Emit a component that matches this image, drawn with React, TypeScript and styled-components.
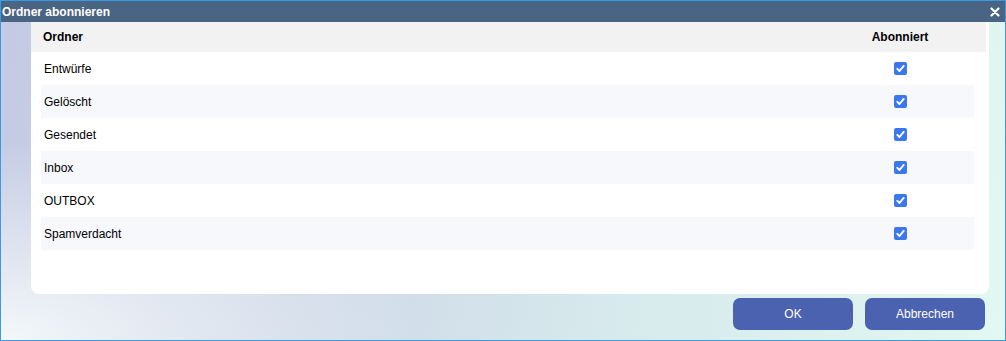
import React from "react";
import styled, { createGlobalStyle } from "styled-components";

const GlobalStyle = createGlobalStyle`
  html, body {
    margin: 0;
    padding: 0;
  }
  body {
    font-family: "Liberation Sans", Arial, sans-serif;
    font-size: 12px;
    color: #000;
  }
`;

const Window = styled.div`
  box-sizing: border-box;
  width: 1006px;
  height: 341px;
  border: 1px solid #3a9ae2;
  display: flex;
  flex-direction: column;
  background:
    radial-gradient(ellipse 420px 200px at 0% 100%, rgba(246, 250, 251, 0.95), rgba(246, 250, 251, 0) 100%),
    linear-gradient(100deg, #c3cae2 0%, #cfd9e8 35%, #d6e8ec 60%, #e2f8f1 100%);
`;

const TitleBar = styled.div`
  height: 21px;
  flex: none;
  background: #4a6483;
  display: flex;
  align-items: center;
  justify-content: space-between;
  padding: 0 5px 0 1px;
`;

const Title = styled.span`
  color: #fff;
  font-weight: bold;
  font-size: 12px;
`;

const CloseButton = styled.button`
  border: 0;
  background: none;
  padding: 0;
  width: 10px;
  height: 10px;
  display: flex;
  cursor: pointer;
`;

const Card = styled.div`
  height: 272px;
  margin: 0 16px 0 30px;
  background: #fff;
  border-radius: 0 0 8px 8px;
  display: flex;
  flex-direction: column;
`;

const HeaderRow = styled.div`
  height: 30px;
  margin-right: 3px;
  background: #f2f2f2;
  display: grid;
  grid-template-columns: 1fr 148px;
  align-items: center;
  padding: 0 12px 0 10px;
  font-weight: bold;
`;

const HeaderCell = styled.div<{ $center?: boolean }>`
  padding-left: ${(p) => (p.$center ? "0" : "2px")};
  text-align: ${(p) => (p.$center ? "center" : "left")};
`;

const Body = styled.div`
  padding: 0 15px 0 10px;
`;

const Row = styled.div<{ $striped: boolean }>`
  height: 33px;
  display: grid;
  grid-template-columns: 1fr 148px;
  align-items: center;
  background: ${(p) => (p.$striped ? "#f7f8fc" : "#fff")};
`;

const NameCell = styled.div`
  padding-left: 3px;
`;

const CheckCell = styled.div`
  display: flex;
  justify-content: center;
`;

const CheckBox = styled.span`
  width: 13px;
  height: 13px;
  border-radius: 2px;
  background: #3b78ec;
  display: flex;
  align-items: center;
  justify-content: center;
`;

const Footer = styled.div`
  display: flex;
  justify-content: flex-end;
  gap: 12px;
  padding: 4px 20px 0 0;
`;

const Button = styled.button`
  width: 120px;
  height: 32px;
  border: 0;
  border-radius: 7px;
  background: #4a62b0;
  color: #fff;
  font-family: "Liberation Sans", Arial, sans-serif;
  font-size: 12px;
  cursor: pointer;
`;

const folders = ["Entwürfe", "Gelöscht", "Gesendet", "Inbox", "OUTBOX", "Spamverdacht"];

const Check = () => (
  <CheckBox>
    <svg width="9" height="9" viewBox="0 0 9 9">
      <path d="M1.3 4.8 L3.5 7 L7.7 1.9" fill="none" stroke="#fff" strokeWidth="1.9" strokeLinecap="round" strokeLinejoin="round" />
    </svg>
  </CheckBox>
);

export default function App() {
  return (
    <>
      <GlobalStyle />
      <Window>
        <TitleBar>
          <Title>Ordner abonnieren</Title>
          <CloseButton aria-label="Schließen">
            <svg width="10" height="10" viewBox="0 0 10 10">
              <path d="M1.5 1.5 L8.5 8.5 M8.5 1.5 L1.5 8.5" stroke="#fff" strokeWidth="2.2" strokeLinecap="round" />
            </svg>
          </CloseButton>
        </TitleBar>
        <Card>
          <HeaderRow>
            <HeaderCell>Ordner</HeaderCell>
            <HeaderCell $center>Abonniert</HeaderCell>
          </HeaderRow>
          <Body>
            {folders.map((name, i) => (
              <Row key={name} $striped={i % 2 === 1}>
                <NameCell>{name}</NameCell>
                <CheckCell>
                  <Check />
                </CheckCell>
              </Row>
            ))}
          </Body>
        </Card>
        <Footer>
          <Button>OK</Button>
          <Button>Abbrechen</Button>
        </Footer>
      </Window>
    </>
  );
}
